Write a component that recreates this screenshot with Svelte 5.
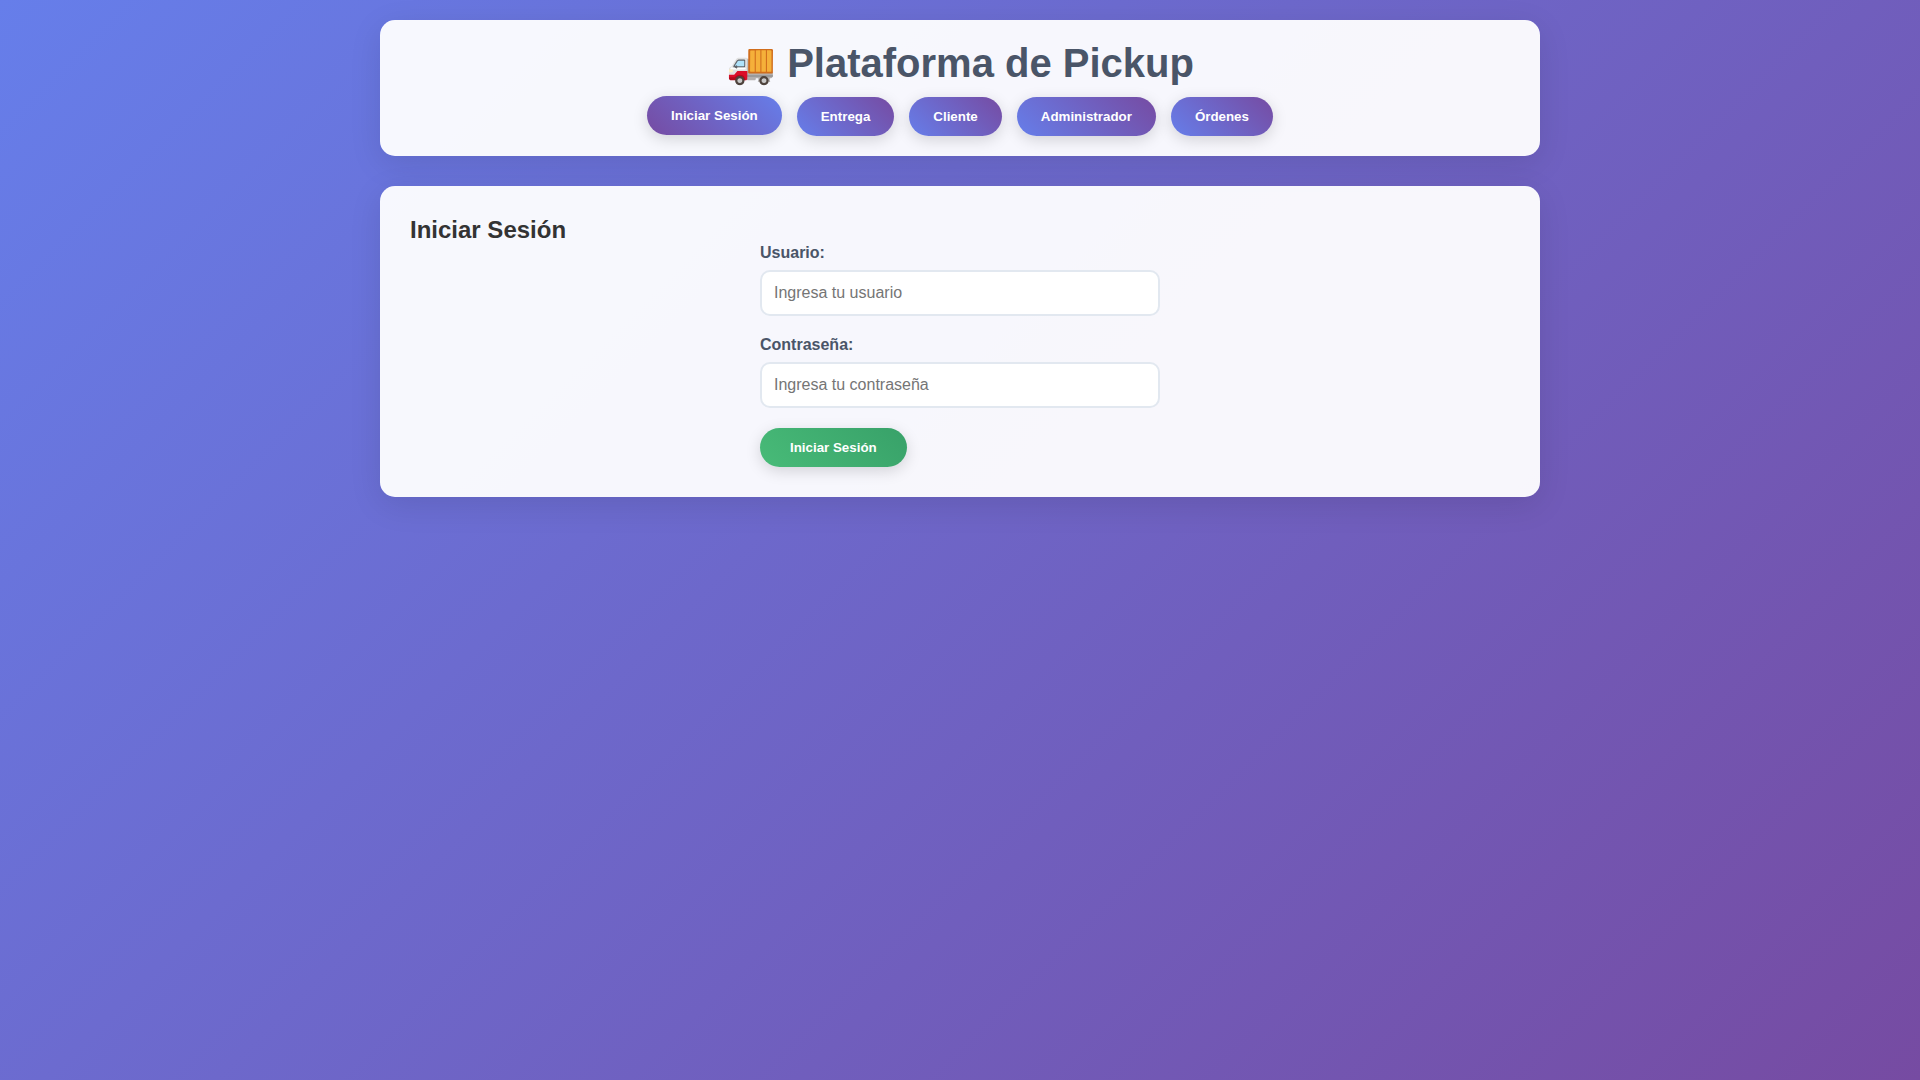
<script>
  const tabs = [
    { label: 'Iniciar Sesión', active: true },
    { label: 'Entrega' },
    { label: 'Cliente' },
    { label: 'Administrador' },
    { label: 'Órdenes' }
  ];
</script>

<div class="page">
  <header class="card header">
    <h1>🚚 Plataforma de Pickup</h1>
    <nav class="tabs">
      {#each tabs as tab}
        <button type="button" class="pill" class:active={tab.active}>{tab.label}</button>
      {/each}
    </nav>
  </header>

  <main class="card content">
    <h2>Iniciar Sesión</h2>
    <form class="form" onsubmit={(e) => e.preventDefault()}>
      <div class="group">
        <label for="user">Usuario:</label>
        <input id="user" type="text" placeholder="Ingresa tu usuario" />
      </div>
      <div class="group">
        <label for="pass">Contraseña:</label>
        <input id="pass" type="password" placeholder="Ingresa tu contraseña" />
      </div>
      <button type="submit" class="submit">Iniciar Sesión</button>
    </form>
  </main>
</div>

<style>
  :global(body) {
    margin: 0;
    min-height: 100vh;
    background: linear-gradient(135deg, #667eea 0%, #764ba2 100%);
    font-family: "Liberation Sans", Arial, sans-serif;
  }
  .page {
    box-sizing: border-box;
    max-width: 1200px;
    margin: 0 auto;
    padding: 20px;
  }
  .card {
    background: rgba(255, 255, 255, 0.95);
    border-radius: 15px;
    box-shadow: 0 8px 32px rgba(0, 0, 0, 0.1);
  }
  .header {
    padding: 20px;
    margin-bottom: 30px;
    text-align: center;
  }
  h1 {
    margin: 0 0 10px;
    font-size: 40px;
    font-weight: 700;
    color: #4a5568;
  }
  .tabs {
    display: flex;
    justify-content: center;
    gap: 15px;
  }
  .pill, .submit {
    border: none;
    border-radius: 25px;
    color: #fff;
    font-family: "Liberation Sans", Arial, sans-serif;
    font-size: 13.333px;
    font-weight: 700;
    box-shadow: 0 4px 15px rgba(0, 0, 0, 0.15);
  }
  .pill {
    padding: 12px 24px;
    background: linear-gradient(45deg, #667eea, #764ba2);
  }
  .pill.active {
    background: linear-gradient(45deg, #764ba2, #667eea);
    transform: translateY(-1px);
  }
  .content {
    padding: 30px;
  }
  h2 {
    margin: 0;
    font-size: 24px;
    font-weight: 700;
    color: #333;
  }
  .form {
    width: 400px;
    margin: 0 auto;
  }
  .group {
    margin-bottom: 20px;
  }
  label {
    display: block;
    margin-bottom: 8px;
    font-size: 16px;
    font-weight: 700;
    color: #4a5568;
  }
  input {
    display: block;
    box-sizing: border-box;
    width: 100%;
    padding: 12px;
    border: 2px solid #e2e8f0;
    border-radius: 10px;
    background: #fff;
    font-family: "Liberation Sans", Arial, sans-serif;
    font-size: 16px;
  }
  .submit {
    padding: 12px 30px;
    background: linear-gradient(45deg, #48bb78, #38a169);
  }
</style>
